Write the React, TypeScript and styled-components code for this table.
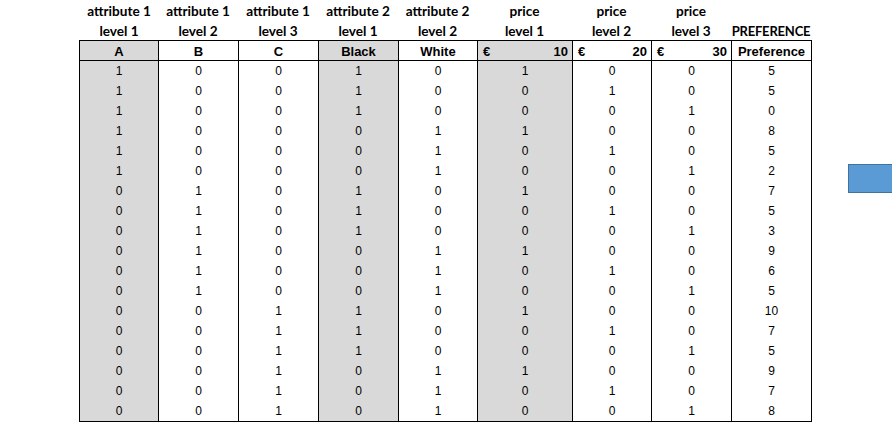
import React from 'react';
import styled, {createGlobalStyle} from "styled-components";

const GlobalStyle = createGlobalStyle`
    html, body {
        margin: 0;
        padding: 0;
        background: #ffffff;
    }
    body {
        font-family: "Liberation Sans", Arial, sans-serif;
        color: #000000;
    }
`

type Column = {
    cap1: string
    cap2: string
    head: string
    euro?: boolean
    width: number
    shade: boolean
}

const COLUMNS: Column[] = [
    {cap1: 'attribute 1', cap2: 'level 1', head: 'A', width: 78, shade: true},
    {cap1: 'attribute 1', cap2: 'level 2', head: 'B', width: 80, shade: false},
    {cap1: 'attribute 1', cap2: 'level 3', head: 'C', width: 80, shade: false},
    {cap1: 'attribute 2', cap2: 'level 1', head: 'Black', width: 80, shade: true},
    {cap1: 'attribute 2', cap2: 'level 2', head: 'White', width: 79, shade: false},
    {cap1: 'price', cap2: 'level 1', head: '10', euro: true, width: 95, shade: true},
    {cap1: 'price', cap2: 'level 2', head: '20', euro: true, width: 79, shade: false},
    {cap1: 'price', cap2: 'level 3', head: '30', euro: true, width: 80, shade: false},
    {cap1: '', cap2: 'PREFERENCE', head: 'Preference', width: 80, shade: false},
];

const ROWS: number[][] = [
    [1, 0, 0, 1, 0, 1, 0, 0, 5],
    [1, 0, 0, 1, 0, 0, 1, 0, 5],
    [1, 0, 0, 1, 0, 0, 0, 1, 0],
    [1, 0, 0, 0, 1, 1, 0, 0, 8],
    [1, 0, 0, 0, 1, 0, 1, 0, 5],
    [1, 0, 0, 0, 1, 0, 0, 1, 2],
    [0, 1, 0, 1, 0, 1, 0, 0, 7],
    [0, 1, 0, 1, 0, 0, 1, 0, 5],
    [0, 1, 0, 1, 0, 0, 0, 1, 3],
    [0, 1, 0, 0, 1, 1, 0, 0, 9],
    [0, 1, 0, 0, 1, 0, 1, 0, 6],
    [0, 1, 0, 0, 1, 0, 0, 1, 5],
    [0, 0, 1, 1, 0, 1, 0, 0, 10],
    [0, 0, 1, 1, 0, 0, 1, 0, 7],
    [0, 0, 1, 1, 0, 0, 0, 1, 5],
    [0, 0, 1, 0, 1, 1, 0, 0, 9],
    [0, 0, 1, 0, 1, 0, 1, 0, 7],
    [0, 0, 1, 0, 1, 0, 0, 1, 8],
];

const TEMPLATE = COLUMNS.map(c => `${c.width}px`).join(' ');

const Page = styled.div`
    position: relative;
    width: 892px;
    height: 441px;
    overflow: hidden;
    padding-left: 79px;
    box-sizing: border-box;
`

const Captions = styled.div`
    display: grid;
    grid-template-columns: ${TEMPLATE};
    padding-left: 1px;
`

const Caption = styled.div`
    display: flex;
    flex-direction: column;
`

const CaptionLine = styled.div<{ $caps?: boolean }>`
    height: 20px;
    line-height: 22px;
    text-align: center;
    white-space: nowrap;
    font-family: Lato, "Liberation Sans", sans-serif;
    font-weight: 700;
    font-size: ${({$caps}) => $caps ? '13px' : '13.6px'};
    letter-spacing: ${({$caps}) => $caps ? '-0.2px' : '0'};
`

const Sheet = styled.div`
    display: grid;
    grid-template-columns: ${TEMPLATE};
    grid-auto-rows: 20px;
    width: fit-content;
    border: 1px solid #000000;
`

const Cell = styled.div<{ $shade: boolean; $first: boolean; $head?: boolean }>`
    box-sizing: border-box;
    border-left: ${({$first}) => $first ? 'none' : '1px solid #000000'};
    border-bottom: ${({$head}) => $head ? '1px solid #000000' : 'none'};
    background: ${({$shade}) => $shade ? '#d9d9d9' : '#ffffff'};
    font-family: "Liberation Sans", Arial, sans-serif;
    font-size: ${({$head}) => $head ? '13px' : '12px'};
    font-weight: ${({$head}) => $head ? 700 : 400};
    line-height: 21px;
    text-align: center;
    white-space: nowrap;
`

const Money = styled(Cell)`
    display: flex;
    justify-content: space-between;
    padding: 0 4px 0 5px;
`

const Shape = styled.div`
    position: absolute;
    left: 848px;
    top: 164px;
    width: 60px;
    height: 29px;
    box-sizing: border-box;
    background: #5b9bd5;
    border: 1px solid #41719c;
`

const App: React.FC = () => {
    return (
        <Page>
            <GlobalStyle/>
            <Captions>
                {COLUMNS.map((c, i) => (
                    <Caption key={i}>
                        <CaptionLine>{c.cap1}</CaptionLine>
                        <CaptionLine $caps={c.cap2 === 'PREFERENCE'}>{c.cap2}</CaptionLine>
                    </Caption>
                ))}
            </Captions>
            <Sheet>
                {COLUMNS.map((c, i) => c.euro ? (
                    <Money key={`h${i}`} $head $shade={c.shade} $first={i === 0}>
                        <span>€</span>
                        <span>{c.head}</span>
                    </Money>
                ) : (
                    <Cell key={`h${i}`} $head $shade={c.shade} $first={i === 0}>{c.head}</Cell>
                ))}
                {ROWS.map((row, r) => row.map((v, i) => (
                    <Cell key={`${r}-${i}`} $shade={COLUMNS[i].shade} $first={i === 0}>{v}</Cell>
                )))}
            </Sheet>
            <Shape/>
        </Page>
    )
};

export default App;
